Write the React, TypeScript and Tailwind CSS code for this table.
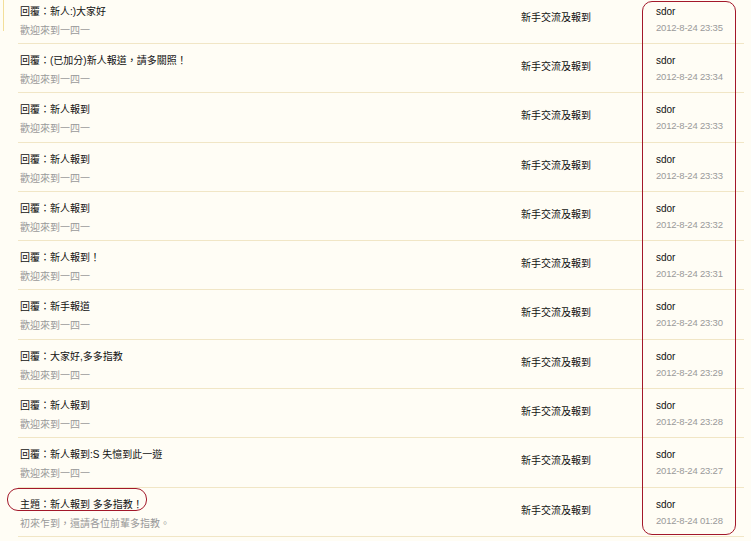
const rows = [
  { title: "回覆：新人:)大家好", sub: "歡迎來到一四一", time: "2012-8-24 23:35" },
  { title: "回覆：(已加分)新人報道，請多關照！", sub: "歡迎來到一四一", time: "2012-8-24 23:34" },
  { title: "回覆：新人報到", sub: "歡迎來到一四一", time: "2012-8-24 23:33" },
  { title: "回覆：新人報到", sub: "歡迎來到一四一", time: "2012-8-24 23:33" },
  { title: "回覆：新人報到", sub: "歡迎來到一四一", time: "2012-8-24 23:32" },
  { title: "回覆：新人報到！", sub: "歡迎來到一四一", time: "2012-8-24 23:31" },
  { title: "回覆：新手報道", sub: "歡迎來到一四一", time: "2012-8-24 23:30" },
  { title: "回覆：大家好,多多指教", sub: "歡迎來到一四一", time: "2012-8-24 23:29" },
  { title: "回覆：新人報到", sub: "歡迎來到一四一", time: "2012-8-24 23:28" },
  { title: "回覆：新人報到:S 失憶到此一遊", sub: "歡迎來到一四一", time: "2012-8-24 23:27" },
  { title: "主題：新人報到 多多指教！", sub: "初來乍到，還請各位前輩多指教。", time: "2012-8-24 01:28" },
];

const cjk = "font-['Liberation_Sans','Noto_Sans_CJK_TC',sans-serif]";

const PostRow = ({ title, sub, time }: { title: string; sub: string; time: string }) => (
  <div className="flex h-[49.3px] border-b border-[#f1e6c6]">
    <div className="w-[503px] pl-[2px] pt-[10px] flex flex-col gap-[5px]">
      <p className={`${cjk} text-[10px] leading-[14px] text-[#111]`}>{title}</p>
      <p className={`${cjk} text-[10px] leading-[14px] text-[#999]`}>{sub}</p>
    </div>
    <div className="w-[135px] pt-[16px]">
      <p className={`${cjk} text-[10px] leading-[14px] text-[#111]`}>新手交流及報到</p>
    </div>
    <div className="flex-1 pt-[10px] flex flex-col gap-[2px] font-['Liberation_Sans',sans-serif]">
      <p className="text-[10px] leading-[14px] text-[#111]">sdor</p>
      <p className="text-[9.5px] leading-[14px] text-[#9a9a9a] tracking-[-0.2px]">{time}</p>
    </div>
  </div>
);

export default function App() {
  return (
    <div className="relative w-[751px] h-[541px] overflow-hidden bg-[#fffdf5]">
      <div className="absolute left-[3px] top-0 w-px h-[31px] bg-[#f3df9a]" />
      <div className="ml-[18px] w-[726px] -mt-[5.3px]">
        {rows.map((r, i) => (
          <PostRow key={i} {...r} />
        ))}
      </div>
      <div className="absolute left-[642px] top-[1px] w-[94px] h-[534px] rounded-[10px] border border-[#a3182a]" />
      <div className="absolute left-[7px] top-[488px] w-[140px] h-[23px] rounded-[11px] border border-[#a3182a]" />
    </div>
  );
}
